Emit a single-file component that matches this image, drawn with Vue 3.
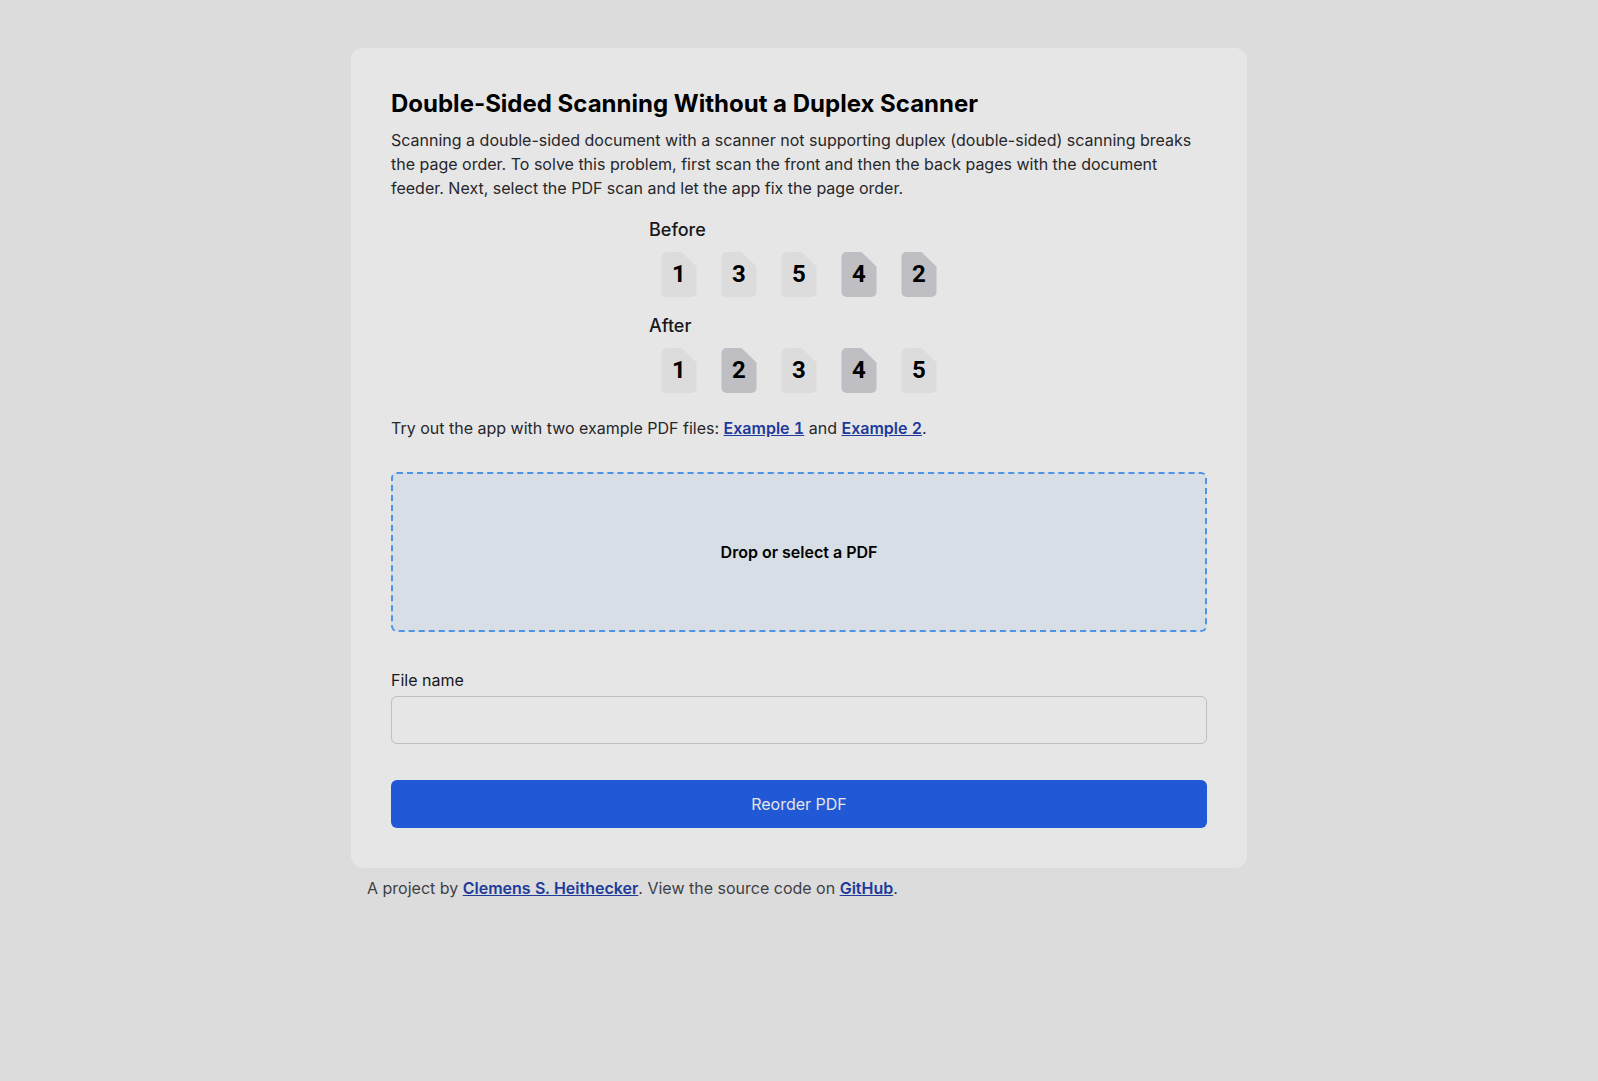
<script setup>
const rows = [
  { label: 'Before', pages: [1, 3, 5, 4, 2] },
  { label: 'After', pages: [1, 2, 3, 4, 5] },
]
</script>

<template>
  <div class="page">
    <main class="card">
      <h1>Double-Sided Scanning Without a Duplex Scanner</h1>
      <p>
        Scanning a double-sided document with a scanner not supporting duplex (double-sided)
        scanning breaks the page order. To solve this problem, first scan the front and then the
        back pages with the document feeder. Next, select the PDF scan and let the app fix the page
        order.
      </p>
      <div class="orders">
        <section v-for="row in rows" :key="row.label">
          <h2>{{ row.label }}</h2>
          <div class="sheets">
            <svg v-for="n in row.pages" :key="n" class="sheet" :class="{ back: n % 2 === 0 }" viewBox="0 0 36 46">
              <path d="M5.5 0H20.5L35.5 14.5V40a5 5 0 0 1-5 5H5.5a5 5 0 0 1-5-5V5a5 5 0 0 1 5-5Z" />
              <text x="18" y="30" text-anchor="middle">{{ n }}</text>
            </svg>
          </div>
        </section>
      </div>
      <p class="examples">
        Try out the app with two example PDF files: <a href="#example-1">Example 1</a> and
        <a href="#example-2">Example 2</a>.
      </p>
      <form @submit.prevent>
        <button type="button" class="drop">Drop or select a PDF</button>
        <label for="file-name">File name</label>
        <input id="file-name" type="text" />
        <button type="submit" class="submit">Reorder PDF</button>
      </form>
    </main>
    <footer>
      A project by <a href="#author">Clemens S. Heithecker</a>. View the source code on
      <a href="#github">GitHub</a>.
    </footer>
  </div>
</template>

<style>
body {
  background: #dcdcdc;
}
</style>

<style scoped>
.page {
  box-sizing: border-box;
  max-width: 896px;
  margin: 0 auto;
  padding: 48px 0;
  font: 16px/24px Inter, sans-serif;
  color: #27272a;
}
.card {
  padding: 40px;
  border-radius: 12px;
  background: #e6e6e6;
}
h1 {
  margin: 0 0 8px;
  font-size: 24px;
  line-height: 32px;
  font-weight: 700;
  color: #000;
}
p {
  margin: 0;
}
.orders {
  width: fit-content;
  margin: 16px auto 0;
}
h2 {
  margin: 0;
  font-size: 18px;
  line-height: 28px;
  font-weight: 500;
  color: #18181b;
}
.sheets {
  display: flex;
  gap: 24px;
  padding: 8px 12px 14px;
}
.sheet {
  width: 36px;
  height: 46px;
  fill: #dcdcdc;
}
.back {
  fill: #bebec3;
}
.sheet text {
  fill: #000;
  font-family: Roboto, sans-serif;
  font-size: 24px;
  font-weight: 700;
}
a {
  font-weight: 600;
  font-variant-numeric: tabular-nums;
  color: #1e3a9a;
  text-decoration: underline;
}
.examples {
  margin-top: 8px;
}
form {
  display: flex;
  flex-direction: column;
}
button,
input {
  box-sizing: border-box;
  font: inherit;
  border-radius: 6px;
}
.drop {
  height: 160px;
  margin: 32px 0 36px;
  border: 2px dashed #4f93e6;
  background: #d7dee6;
  font-weight: 600;
  color: #000;
}
label {
  margin-bottom: 4px;
  color: #18181b;
}
input {
  height: 48px;
  padding: 0 16px;
  border: 1px solid #bebec3;
  background: transparent;
}
.submit {
  height: 48px;
  margin-top: 36px;
  border: 0;
  background: #2058d6;
  color: #e6e6e6;
}
footer {
  padding: 8px 16px;
  color: #3f3f46;
}
</style>
